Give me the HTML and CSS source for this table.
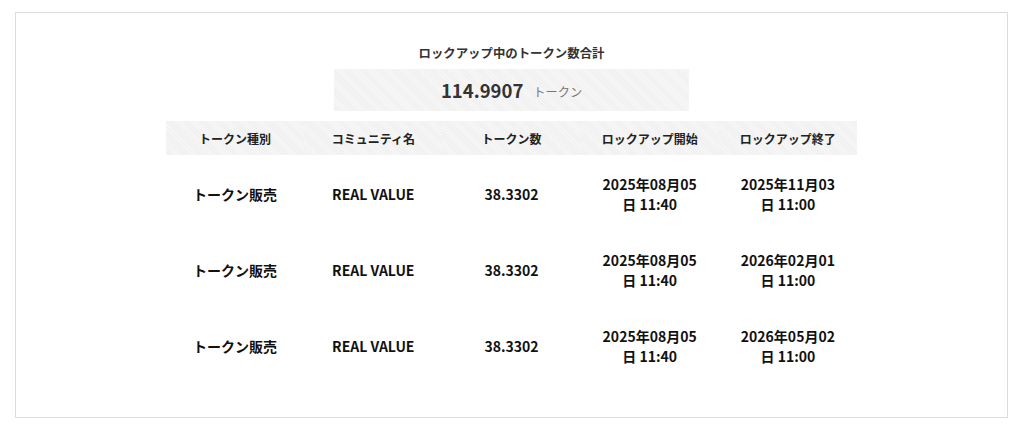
FILE: index.html
```html
<!DOCTYPE html>
<html lang="ja">
<head>
    <meta charset="UTF-8">
    <meta name="viewport" content="width=device-width, initial-scale=1.0">
    <title>ロックアップ状況</title>
    <link rel="stylesheet" href="styles.css">
</head>
<body>
    <section class="lockup-panel">
        <h2 class="lockup-title">ロックアップ中のトークン数合計</h2>
        <div class="lockup-total">
            <span class="total-value">114.9907</span>
            <span class="total-unit">トークン</span>
        </div>

        <table class="lockup-table">
            <thead>
                <tr>
                    <th>トークン種別</th>
                    <th>コミュニティ名</th>
                    <th>トークン数</th>
                    <th>ロックアップ開始</th>
                    <th>ロックアップ終了</th>
                </tr>
            </thead>
            <tbody>
                <tr>
                    <td>トークン販売</td>
                    <td>REAL VALUE</td>
                    <td>38.3302</td>
                    <td class="date">2025年08月05日 11:40</td>
                    <td class="date">2025年11月03日 11:00</td>
                </tr>
                <tr>
                    <td>トークン販売</td>
                    <td>REAL VALUE</td>
                    <td>38.3302</td>
                    <td class="date">2025年08月05日 11:40</td>
                    <td class="date">2026年02月01日 11:00</td>
                </tr>
                <tr>
                    <td>トークン販売</td>
                    <td>REAL VALUE</td>
                    <td>38.3302</td>
                    <td class="date">2025年08月05日 11:40</td>
                    <td class="date">2026年05月02日 11:00</td>
                </tr>
            </tbody>
        </table>
    </section>
</body>
</html>
```

FILE: styles.css
```css
body {
    margin: 0;
    padding: 0;
    background: #fff;
    color: #222;
    font-family: "Noto Sans CJK JP", "Noto Sans", sans-serif;
}
.lockup-panel {
    margin: 12px 16px 0 15px;
    height: 406px;
    box-sizing: border-box;
    border: 1px solid #dcdcdc;
    padding-top: 31px;
    text-align: center;
}
.lockup-title {
    margin: 0;
    font-size: 12.4px;
    line-height: 18px;
    font-weight: bold;
    color: #333;
}
.lockup-total {
    width: 355px;
    height: 42px;
    margin: 7px auto 0;
    display: flex;
    align-items: center;
    justify-content: center;
    gap: 10px;
    background: repeating-linear-gradient(45deg, #f0f0f0 0 1px, #f7f7f7 1px 2px);
}
.total-value {
    font-size: 18.5px;
    font-weight: bold;
    color: #333;
}
.total-unit {
    font-size: 12.2px;
    color: #777;
    padding-top: 3px;
}
.lockup-table {
    width: 691px;
    margin: 10px auto 0;
    border-collapse: collapse;
    table-layout: fixed;
}
.lockup-table th {
    height: 34px;
    padding: 0 10px;
    font-size: 12px;
    font-weight: bold;
    color: #222;
    background: repeating-linear-gradient(45deg, #f0f0f0 0 1px, #f7f7f7 1px 2px);
}
.lockup-table td {
    height: 75px;
    padding: 1px 17px 0;
    font-size: 14px;
    line-height: 20px;
    font-weight: bold;
    color: #111;
}
```
